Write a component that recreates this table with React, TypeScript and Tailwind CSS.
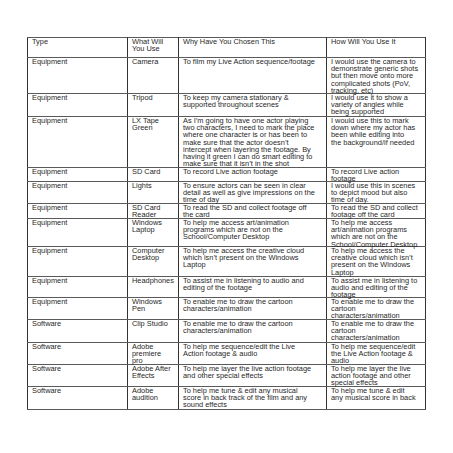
const rows: { h: string; c: string[][] }[] = [
  { h: "h-[19px]", c: [["Type"], ["What Will", "You Use"], ["Why Have You Chosen This"], ["How Will You Use It"]] },
  {
    h: "h-[35px]",
    c: [
      ["Equipment"],
      ["Camera"],
      ["To film my Live Action sequence/footage"],
      ["I would use the camera to", "demonstrate generic shots", "but then move onto more", "complicated shots (PoV,", "tracking, etc)"],
    ],
  },
  {
    h: "h-[22px]",
    c: [
      ["Equipment"],
      ["Tripod"],
      ["To keep my camera stationary &", "supported throughout scenes"],
      ["I would use it to show a", "variety of angles while", "being supported"],
    ],
  },
  {
    h: "h-[50px]",
    c: [
      ["Equipment"],
      ["LX Tape", "Green"],
      [
        "As I\u2019m going to have one actor playing",
        "two characters, I need to mark the place",
        "where one character is or has been to",
        "make sure that the actor doesn\u2019t",
        "intercept when layering the footage. By",
        "having it green I can do smart editing to",
        "make sure that it isn\u2019t in the shot",
      ],
      ["I would use this to mark", "down where my actor has", "been while editing into", "the background/if needed"],
    ],
  },
  {
    h: "h-[13px]",
    c: [["Equipment"], ["SD Card"], ["To record Live action footage"], ["To record Live action", "footage"]],
  },
  {
    h: "h-[21px]",
    c: [
      ["Equipment"],
      ["Lights"],
      ["To ensure actors can be seen in clear", "detail as well as give impressions on the", "time of day"],
      ["I would use this in scenes", "to depict mood but also", "time of day."],
    ],
  },
  {
    h: "h-[14px]",
    c: [
      ["Equipment"],
      ["SD Card", "Reader"],
      ["To read the SD and collect footage off", "the card"],
      ["To read the SD and collect", "footage off the card"],
    ],
  },
  {
    h: "h-[27px]",
    c: [
      ["Equipment"],
      ["Windows", "Laptop"],
      ["To help me access art/animation", "programs which are not on the", "School/Computer Desktop"],
      ["To help me access", "art/animation programs", "which are not on the", "School/Computer Desktop"],
    ],
  },
  {
    h: "h-[29px]",
    c: [
      ["Equipment"],
      ["Computer", "Desktop"],
      ["To help me access the creative cloud", "which isn\u2019t present on the Windows", "Laptop"],
      ["To help me access the", "creative cloud which isn\u2019t", "present on the Windows", "Laptop"],
    ],
  },
  {
    h: "h-[20px]",
    c: [
      ["Equipment"],
      ["Headphones"],
      ["To assist me in listening to audio and", "editing of the footage"],
      ["To assist me in listening to", "audio and editing of the", "footage"],
    ],
  },
  {
    h: "h-[21px]",
    c: [
      ["Equipment"],
      ["Windows", "Pen"],
      ["To enable me to draw the cartoon", "characters/animation"],
      ["To enable me to draw the", "cartoon", "characters/animation"],
    ],
  },
  {
    h: "h-[22px]",
    c: [
      ["Software"],
      ["Clip Studio"],
      ["To enable me to draw the cartoon", "characters/animation"],
      ["To enable me to draw the", "cartoon", "characters/animation"],
    ],
  },
  {
    h: "h-[21px]",
    c: [
      ["Software"],
      ["Adobe", "premiere", "pro"],
      ["To help me sequence/edit the Live", "Action footage & audio"],
      ["To help me sequence/edit", "the Live Action footage &", "audio"],
    ],
  },
  {
    h: "h-[21px]",
    c: [
      ["Software"],
      ["Adobe After", "Effects"],
      ["To help me layer the live action footage", "and other special effects"],
      ["To help me layer the live", "action footage and other", "special effects"],
    ],
  },
  {
    h: "h-[22px]",
    c: [
      ["Software"],
      ["Adobe", "audition"],
      ["To help me tune & edit any musical", "score in back track of the film and any", "sound effects"],
      ["To help me tune & edit", "any musical score in back"],
    ],
  },
];

const colW = ["w-[100px]", "w-[51px]", "w-[148px]", "w-[99px]"];

export default function App() {
  return (
    <div className="w-[453px] h-[453px] bg-white overflow-hidden pt-[37px] pl-[27px] font-['Liberation_Sans',Arial,sans-serif] text-[#1f1f1f]">
      <table className="border-collapse table-fixed w-[398px] border border-[#333]">
        <colgroup>
          {colW.map((w, i) => (
            <col key={i} className={w} />
          ))}
        </colgroup>
        <tbody>
          {rows.map((r, ri) => (
            <tr key={ri}>
              {r.c.map((lines, ci) => (
                <td
                  key={ci}
                  className="align-top border-x border-x-[#333] border-y border-y-[#5a5a5a] p-0 text-[7.4px] leading-[7.2px] whitespace-nowrap"
                >
                  <div className={`${r.h} pl-[4px] overflow-visible`}>
                    {lines.map((l, li) => (
                      <div key={li}>{l}</div>
                    ))}
                  </div>
                </td>
              ))}
            </tr>
          ))}
        </tbody>
      </table>
    </div>
  );
}
